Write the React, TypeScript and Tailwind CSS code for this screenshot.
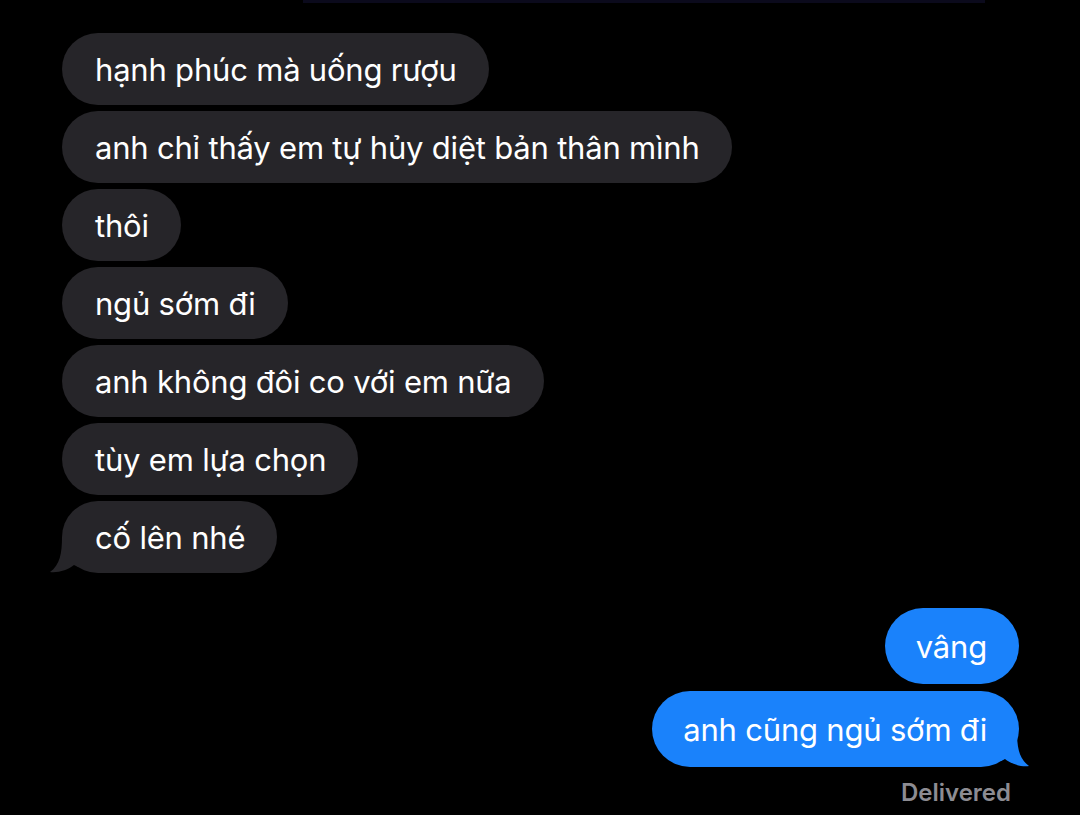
import * as React from "react";

const incoming = [
  "hạnh phúc mà uống rượu",
  "anh chỉ thấy em tự hủy diệt bản thân mình",
  "thôi",
  "ngủ sớm đi",
  "anh không đôi co với em nữa",
  "tùy em lựa chọn",
  "cố lên nhé",
];

const outgoing = ["vâng", "anh cũng ngủ sớm đi"];

const LeftTail = () => (
  <svg
    className="absolute left-[-14px] bottom-0"
    width="30"
    height="36"
    viewBox="0 0 30 36"
  >
    <path d="M30 0 L14 0 C14 16 12 28 2 35 C10 36 20 33 26 28 L30 30 Z" fill="#262529" />
  </svg>
);

const RightTail = () => (
  <svg
    className="absolute right-[-12px] bottom-0"
    width="30"
    height="36"
    viewBox="0 0 30 36"
  >
    <path d="M0 0 L16 0 C16 16 18 28 28 35 C20 36 10 33 4 28 L0 30 Z" fill="#1a82fb" />
  </svg>
);

export default function App() {
  return (
    <div
      className="w-[1080px] h-[815px] bg-black overflow-hidden flex flex-col"
      style={{ fontFamily: "Inter, 'Noto Sans', sans-serif" }}
    >
      <div className="ml-[303px] w-[682px] h-[3px] bg-[#0b0a1c]" />
      <div className="flex flex-col items-start gap-[6px] pl-[62px] pt-[30px]">
        {incoming.map((t, i) => (
          <div
            key={i}
            className="relative h-[72px] flex items-center rounded-full bg-[#262529] pl-[33px] pr-[32px] pt-[2px] text-white text-[31px] tracking-[-0.2px]"
          >
            {i === incoming.length - 1 && <LeftTail />}
            <span className="relative">{t}</span>
          </div>
        ))}
      </div>
      <div className="flex flex-col items-end gap-[7px] pr-[61px] pt-[35px]">
        {outgoing.map((t, i) => (
          <div
            key={i}
            className="relative h-[76px] flex items-center rounded-full bg-[#1a82fb] pl-[31px] pr-[32px] pt-[2px] text-white text-[31px] tracking-[-0.2px]"
          >
            {i === outgoing.length - 1 && <RightTail />}
            <span className="relative">{t}</span>
          </div>
        ))}
        <div className="mt-[1px] mr-[8px] text-[24px] font-semibold text-[#8d8c92]">
          Delivered
        </div>
      </div>
    </div>
  );
}
